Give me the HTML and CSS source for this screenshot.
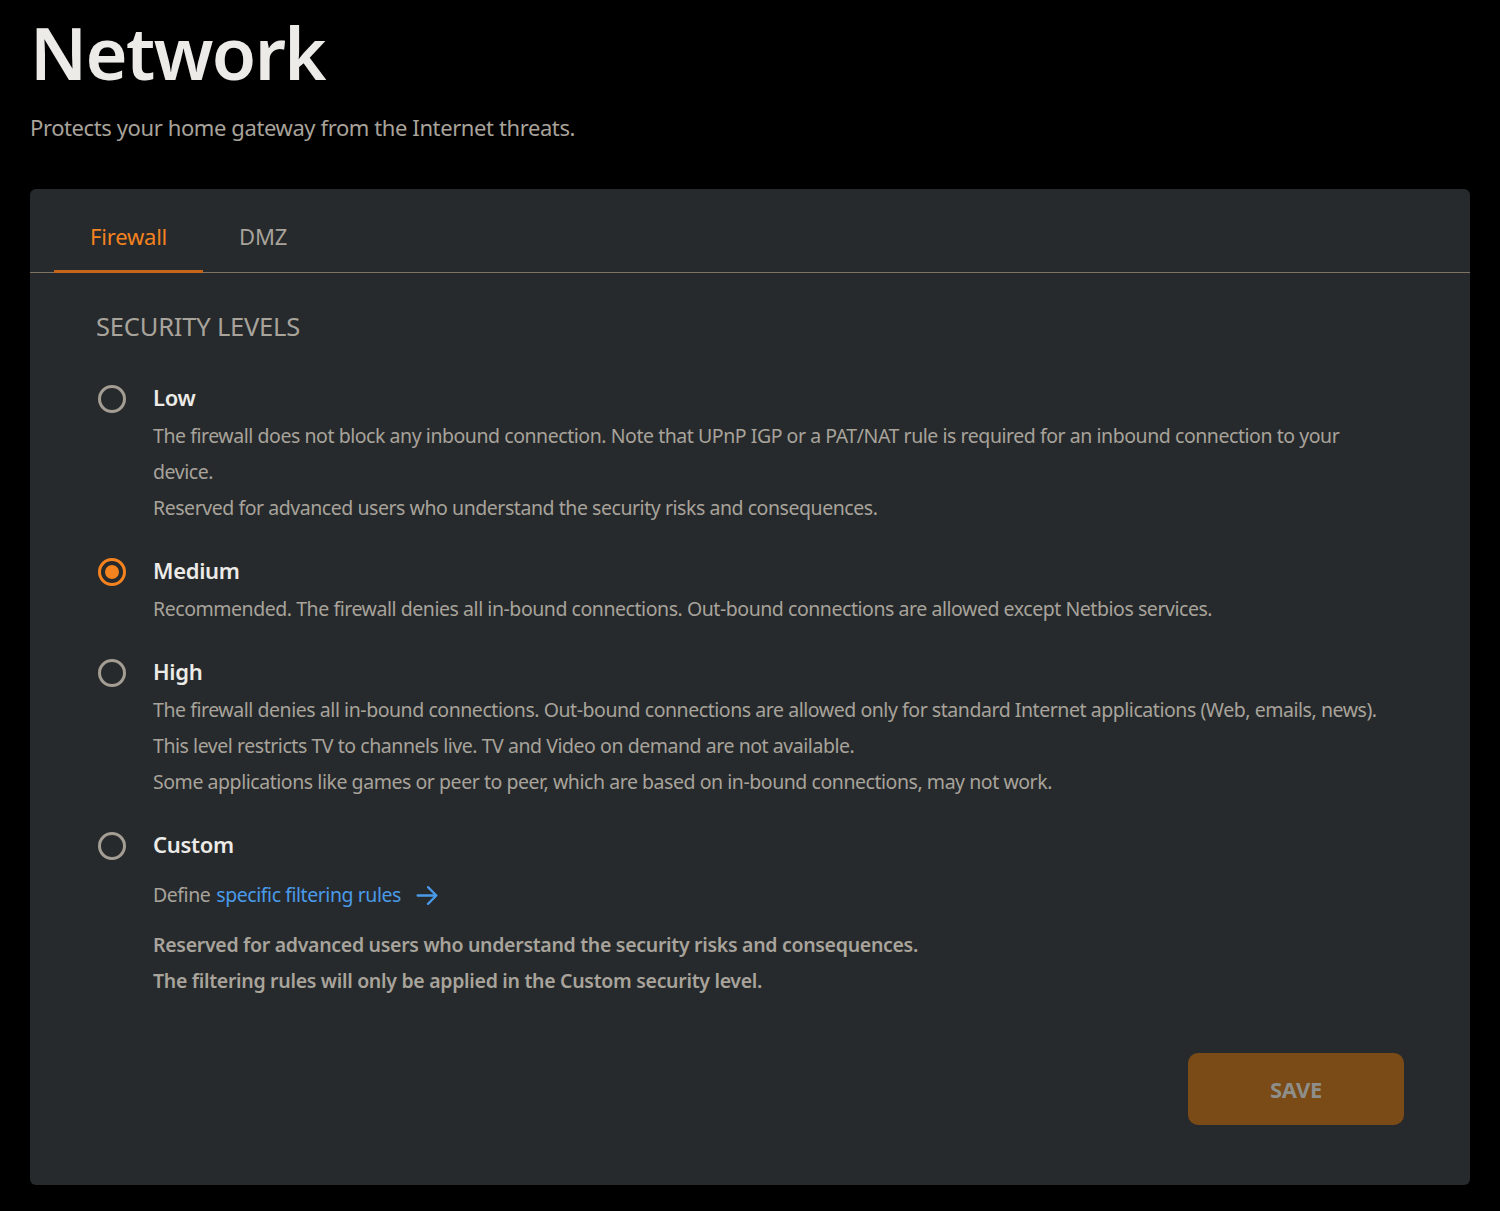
FILE: index.html
```html
<!DOCTYPE html>
<html lang="en">
<head>
    <meta charset="UTF-8">
    <meta name="viewport" content="width=device-width, initial-scale=1.0">
    <title>Network - Firewall</title>
    <link rel="stylesheet" href="styles.css">
</head>
<body>
    <header class="page-header">
        <h1 class="page-title">Network</h1>
        <p class="page-subtitle">Protects your home gateway from the Internet threats.</p>
    </header>

    <main class="card">
        <nav class="tabs">
            <a href="#" class="tab active">Firewall</a>
            <a href="#" class="tab">DMZ</a>
        </nav>

        <form class="card-body">
            <h2 class="section-title">SECURITY LEVELS</h2>

            <label class="level">
                <input type="radio" name="level" value="low">
                <span class="radio"></span>
                <span class="level-name">Low</span>
                <span class="level-desc">
                    The firewall does not block any inbound connection. Note that UPnP IGP or a PAT/NAT rule is required for an inbound connection to your device.<br>
                    Reserved for advanced users who understand the security risks and consequences.
                </span>
            </label>

            <label class="level">
                <input type="radio" name="level" value="medium" checked>
                <span class="radio"></span>
                <span class="level-name">Medium</span>
                <span class="level-desc">
                    Recommended. The firewall denies all in-bound connections. Out-bound connections are allowed except Netbios services.
                </span>
            </label>

            <label class="level">
                <input type="radio" name="level" value="high">
                <span class="radio"></span>
                <span class="level-name">High</span>
                <span class="level-desc">
                    The firewall denies all in-bound connections. Out-bound connections are allowed only for standard Internet applications (Web, emails, news).<br>
                    This level restricts TV to channels live. TV and Video on demand are not available.<br>
                    Some applications like games or peer to peer, which are based on in-bound connections, may not work.
                </span>
            </label>

            <label class="level">
                <input type="radio" name="level" value="custom">
                <span class="radio"></span>
                <span class="level-name">Custom</span>
                <span class="level-desc">
                    <span class="define">Define <a href="#" class="rules-link">specific filtering rules</a>
                        <svg class="arrow" width="25" height="25" viewBox="0 0 24 24" fill="none" stroke="currentColor" stroke-width="2.2" stroke-linecap="round" stroke-linejoin="round">
                            <path d="M2.5 12h18M12.5 4l8 8-8 8"/>
                        </svg>
                    </span>
                    <strong class="warning">Reserved for advanced users who understand the security risks and consequences.<br>
                    The filtering rules will only be applied in the Custom security level.</strong>
                </span>
            </label>

            <div class="actions">
                <button type="submit" class="save-button">SAVE</button>
            </div>
        </form>
    </main>
</body>
</html>
```

FILE: styles.css
```css
:root {
    --fundo: #000;
    --cartao: #262a2c;
    --laranja: #f4821f;
    --laranja-linha: #c4651a;
    --laranja-botao: #7a4a17;
    --texto-claro: #ecebe8;
    --texto-cinza: #a8a39b;
    --linha: #7d7264;
    --azul-link: #4a9ae8;
}

body {
    margin: 0;
    padding: 0 30px 27px;
    background-color: var(--fundo);
    color: var(--texto-cinza);
    font-family: 'Noto Sans', 'Open Sans', sans-serif;
}

.page-header {
    padding-top: 7px;
    padding-bottom: 47px;
}

.page-title {
    margin: 0;
    font-size: 72px;
    font-weight: 600;
    line-height: 90px;
    letter-spacing: -1.6px;
    color: var(--texto-claro);
}

.page-subtitle {
    margin: 15px 0 0;
    font-size: 22px;
    line-height: 30px;
    letter-spacing: -0.4px;
}

.card {
    background-color: var(--cartao);
    border-radius: 6px;
    padding-bottom: 60px;
}

.tabs {
    display: flex;
    padding-left: 24px;
    border-bottom: 1px solid var(--linha);
    height: 83px;
}

.tab {
    display: flex;
    align-items: center;
    padding: 13px 36px 0;
    font-size: 22px;
    letter-spacing: -0.2px;
    color: var(--texto-cinza);
    text-decoration: none;
    border-bottom: 3px solid transparent;
    margin-bottom: -1px;
}

.tab.active {
    color: var(--laranja);
    border-bottom-color: var(--laranja-linha);
}

.card-body {
    padding: 36px 66px 0 68px;
    margin: 0;
}

.section-title {
    margin: 0 0 36px -2px;
    font-size: 25.5px;
    font-weight: 400;
    line-height: 34px;
    letter-spacing: -0.2px;
}

.level {
    display: grid;
    grid-template-columns: 28px 1fr;
    column-gap: 27px;
    margin-bottom: 26px;
    cursor: pointer;
}

.level input {
    display: none;
}

.radio {
    grid-row: 1;
    align-self: center;
    width: 28px;
    height: 28px;
    box-sizing: border-box;
    border: 3px solid #a39d94;
    border-radius: 50%;
    display: flex;
    align-items: center;
    justify-content: center;
}

.level input:checked + .radio {
    border-color: var(--laranja);
}

.level input:checked + .radio::after {
    content: "";
    width: 14px;
    height: 14px;
    border-radius: 50%;
    background-color: var(--laranja);
}

.level-name {
    grid-row: 1;
    grid-column: 2;
    font-size: 22px;
    font-weight: 600;
    line-height: 36px;
    letter-spacing: -0.3px;
    color: var(--texto-claro);
    margin-bottom: 3px;
}

.level-desc {
    grid-column: 2;
    font-size: 19.5px;
    line-height: 36px;
    letter-spacing: -0.45px;
    max-width: 1240px;
}

.define {
    display: flex;
    align-items: center;
    gap: 6px;
    margin: 12px 0 14px;
}

.rules-link {
    color: var(--azul-link);
    text-decoration: none;
}

.arrow {
    color: var(--azul-link);
    margin-left: 8px;
}

.warning {
    display: block;
    font-weight: 600;
    letter-spacing: -0.3px;
}

.actions {
    display: flex;
    justify-content: flex-end;
    margin-top: 54px;
}

.save-button {
    width: 216px;
    height: 72px;
    border: none;
    border-radius: 10px;
    background-color: var(--laranja-botao);
    color: #8e8e8a;
    font-family: inherit;
    font-size: 22px;
    font-weight: 700;
    letter-spacing: -0.3px;
}
```
